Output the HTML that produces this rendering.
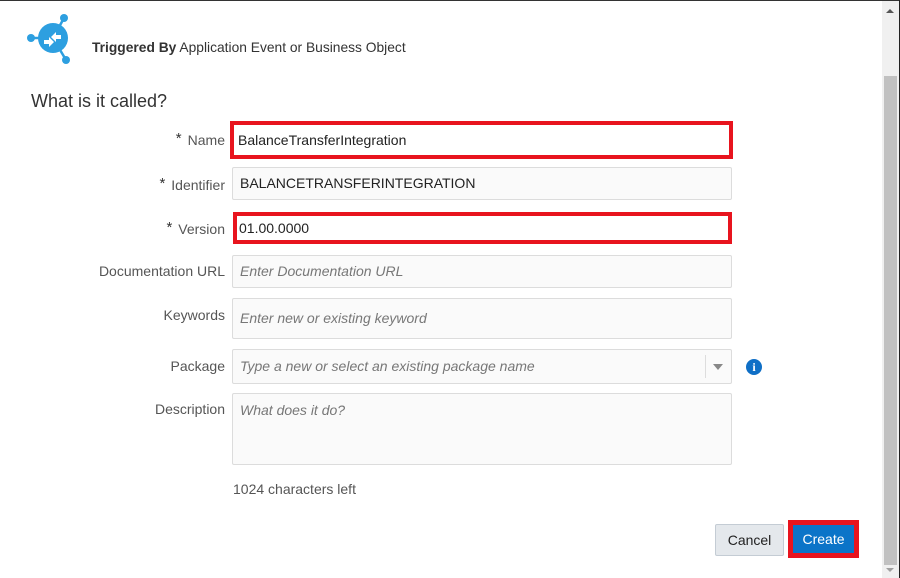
<!DOCTYPE html>
<html><head><meta charset="utf-8"><style>
*{box-sizing:border-box;margin:0;padding:0}
body{width:900px;height:578px;overflow:hidden;background:#fff;font-family:"Liberation Sans",sans-serif;position:relative;color:#333}
.top{position:absolute;left:0;top:0;width:900px;height:1px;background:#333}
.sb{position:absolute;left:882px;top:1px;width:17px;height:577px;background:#f0f0f0}
.thumb{position:absolute;left:884px;top:76px;width:13px;height:489px;background:#c1c1c1}
.rb{position:absolute;left:899px;top:0;width:1px;height:578px;background:#222}
.lbl{position:absolute;right:675px;font-size:14px;color:#555;text-align:right;white-space:nowrap}
.lbl b{font-weight:normal;color:#333;margin-right:6px;font-size:15px;vertical-align:2px}
.in{position:absolute;left:232px;width:500px;background:#fafafa;border:1px solid #dcdcdc;border-radius:2px;font-size:14px;padding-left:7px;color:#222}
.ph{color:#777;font-style:italic}
.red{position:absolute;border:4px solid #e8141e;background:#fff;font-size:14px;color:#222;padding-left:4px}
</style></head><body>
<div class="top"></div>
<svg style="position:absolute;left:24px;top:10px" width="50" height="58" viewBox="24 10 50 58">
<g stroke="#2d9fe0" stroke-width="2.5"><line x1="53" y1="38" x2="64" y2="18"/><line x1="53" y1="38" x2="32" y2="38"/><line x1="53" y1="38" x2="66" y2="60"/></g>
<g fill="#2d9fe0"><circle cx="64" cy="18" r="4"/><circle cx="31" cy="38" r="4"/><circle cx="66" cy="60" r="4"/><circle cx="53" cy="38" r="15"/></g>
<g fill="#fff"><polygon points="44,40 49,40 49,37 54,42 49,47 49,44 44,44"/><polygon points="61,35 56,35 56,32 51,37 56,42 56,39 61,39"/></g>
</svg>
<div style="position:absolute;left:92px;top:40px;font-size:13.8px;color:#333"><b>Triggered By</b> Application Event or Business Object</div>
<div style="position:absolute;left:31px;top:91px;font-size:18px;color:#333">What is it called?</div>

<div class="lbl" style="top:130px"><b>*</b>Name</div>
<div class="red" style="left:230px;top:121px;width:503px;height:38px;line-height:30px">BalanceTransferIntegration</div>

<div class="lbl" style="top:175px"><b>*</b>Identifier</div>
<div class="in" style="top:167px;height:33px;line-height:31px">BALANCETRANSFERINTEGRATION</div>

<div class="lbl" style="top:219px"><b>*</b>Version</div>
<div class="red" style="left:233px;top:212px;width:499px;height:32px;line-height:24px;padding-left:2px">01.00.0000</div>

<div class="lbl" style="top:263px">Documentation URL</div>
<div class="in ph" style="top:255px;height:33px;line-height:31px">Enter Documentation URL</div>

<div class="lbl" style="top:307px">Keywords</div>
<div class="in ph" style="top:298px;height:41px;line-height:39px">Enter new or existing keyword</div>

<div class="lbl" style="top:358px">Package</div>
<div class="in ph" style="top:349px;height:35px;line-height:33px">Type a new or select an existing package name
<div style="position:absolute;left:472px;top:5px;width:1px;height:23px;background:#ddd"></div>
<div style="position:absolute;left:480px;top:14px;width:0;height:0;border-left:5px solid transparent;border-right:5px solid transparent;border-top:6px solid #888"></div></div>
<div style="position:absolute;left:746px;top:359px;width:16px;height:16px;border-radius:50%;background:#0f6fc6;color:#fff;font-size:12px;font-weight:bold;text-align:center;line-height:16px;font-family:'Liberation Serif',serif">i</div>

<div class="lbl" style="top:401px">Description</div>
<div class="in ph" style="top:393px;height:72px;padding-top:8px">What does it do?</div>

<div style="position:absolute;left:233px;top:481px;font-size:14px;color:#555">1024 characters left</div>

<div style="position:absolute;left:715px;top:524px;width:69px;height:32px;background:#e4e8ec;border:1px solid #c4ccd4;border-radius:2px;font-size:14px;color:#222;text-align:center;line-height:30px">Cancel</div>
<div style="position:absolute;left:788px;top:520px;width:71px;height:38px;border:5px solid #e8141e;background:#0b74c8;color:#fff;font-size:14px;text-align:center;line-height:28px">Create</div>

<div class="sb"></div>
<div style="position:absolute;left:886px;top:9px;width:0;height:0;border-left:4px solid transparent;border-right:4px solid transparent;border-bottom:4px solid #555"></div>
<div class="thumb"></div>
<div style="position:absolute;left:886px;top:568px;width:0;height:0;border-left:4px solid transparent;border-right:4px solid transparent;border-top:4px solid #a0a0a0"></div>
<div class="rb"></div>
</body></html>
